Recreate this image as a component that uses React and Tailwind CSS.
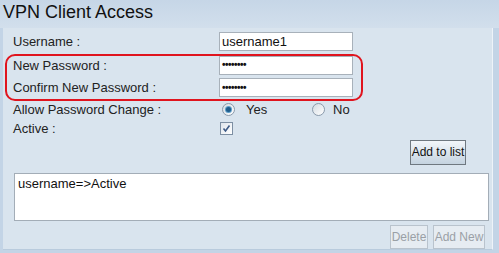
import React from "react";

function Radio({ checked }) {
  return (
    <span className="relative inline-block w-[13px] h-[13px] rounded-full border border-[#8a9aab] bg-gradient-to-br from-[#d4dbe2] to-[#ffffff]">
      {checked && (
        <span className="absolute left-[3px] top-[3px] w-[5px] h-[5px] rounded-full bg-[#1f5d8c] shadow-[0_0_0_1px_#5f9ec9]" />
      )}
    </span>
  );
}

function Checkbox() {
  return (
    <span className="inline-flex items-center justify-center w-[13px] h-[13px] border border-[#7d8fa3] bg-gradient-to-br from-[#dfe5ec] to-[#ffffff]">
      <svg width="9" height="9" viewBox="0 0 9 9">
        <path d="M1.5 4.5 L3.5 7 L7.5 1.5" fill="none" stroke="#3d5a86" strokeWidth="1.6" />
      </svg>
    </span>
  );
}

function Row({ label, h, children, align = "items-start" }) {
  return (
    <div className={`flex ${align}`} style={{ height: h }}>
      <div className="w-[216px] pl-[10px] text-[13px] text-[#222] leading-[19px]">{label}</div>
      <div className="flex items-center">{children}</div>
    </div>
  );
}

function Input({ value, pwd }) {
  return (
    <div className="w-[134px] h-[19px] border border-[#a8b1ba] bg-white px-[2px] flex items-center text-[13px] text-[#111] leading-none">
      {pwd ? <span className="text-[10px] tracking-[-0.5px] font-bold">••••••••</span> : value}
    </div>
  );
}

export default function App() {
  return (
    <div className="w-[499px] h-[253px] bg-[#c3d4e6] relative overflow-hidden font-['Liberation_Sans',Arial,sans-serif]">
      <div className="h-[28px] pl-[3px] pt-[1px] text-[18px] leading-[22px] text-[#111] bg-gradient-to-b from-[#c6d6e7] to-[#d2dfec]">
        VPN Client Access
      </div>
      <div className="ml-[3px] w-[490px] h-[222px] bg-[#d9e4ee] border-r border-r-[#eef3f8] border-b border-b-[#b9cbdd] pt-[4px] flex flex-col">
        <Row label="Username :" h={24}>
          <Input value="username1" />
        </Row>
        <Row label="New Password :" h={23}>
          <Input pwd />
        </Row>
        <Row label="Confirm New Password :" h={23}>
          <Input pwd />
        </Row>
        <Row label="Allow Password Change :" h={18} align="items-center">
          <div className="flex items-center pl-[3px] text-[13px] text-[#222]">
            <Radio checked />
            <span className="ml-[11px] w-[66px]">Yes</span>
            <Radio />
            <span className="ml-[8px]">No</span>
          </div>
        </Row>
        <Row label="Active :" h={19} align="items-center">
          <div className="pl-[1px] flex">
            <Checkbox />
          </div>
        </Row>
        <div className="flex justify-end pr-[26px] mt-[2px]">
          <button className="w-[56px] h-[25px] border border-[#6f7880] bg-gradient-to-b from-[#f2f6fa] to-[#c5d3e0] text-[12px] text-[#111] leading-none">
            Add to list
          </button>
        </div>
        <div className="ml-[11px] mt-[8px] w-[475px] h-[49px] border border-[#a3adb7] bg-white px-[3px] pt-[2px] text-[13px] text-[#111] leading-[16px]">
          username=&gt;Active
        </div>
        <div className="flex justify-end gap-[5px] pr-[7px] mt-[4px]">
          <button className="w-[38px] h-[24px] border border-[#b9c3cd] bg-[#e6ecf2] text-[12px] text-[#9aa0a6] leading-none">
            Delete
          </button>
          <button className="w-[52px] h-[24px] border border-[#b9c3cd] bg-[#e6ecf2] text-[12px] text-[#9aa0a6] leading-none">
            Add New
          </button>
        </div>
      </div>
      <div className="absolute left-[5px] top-[54px] w-[358px] h-[47px] border-2 border-[#e0141e] rounded-[10px] pointer-events-none" />
    </div>
  );
}
